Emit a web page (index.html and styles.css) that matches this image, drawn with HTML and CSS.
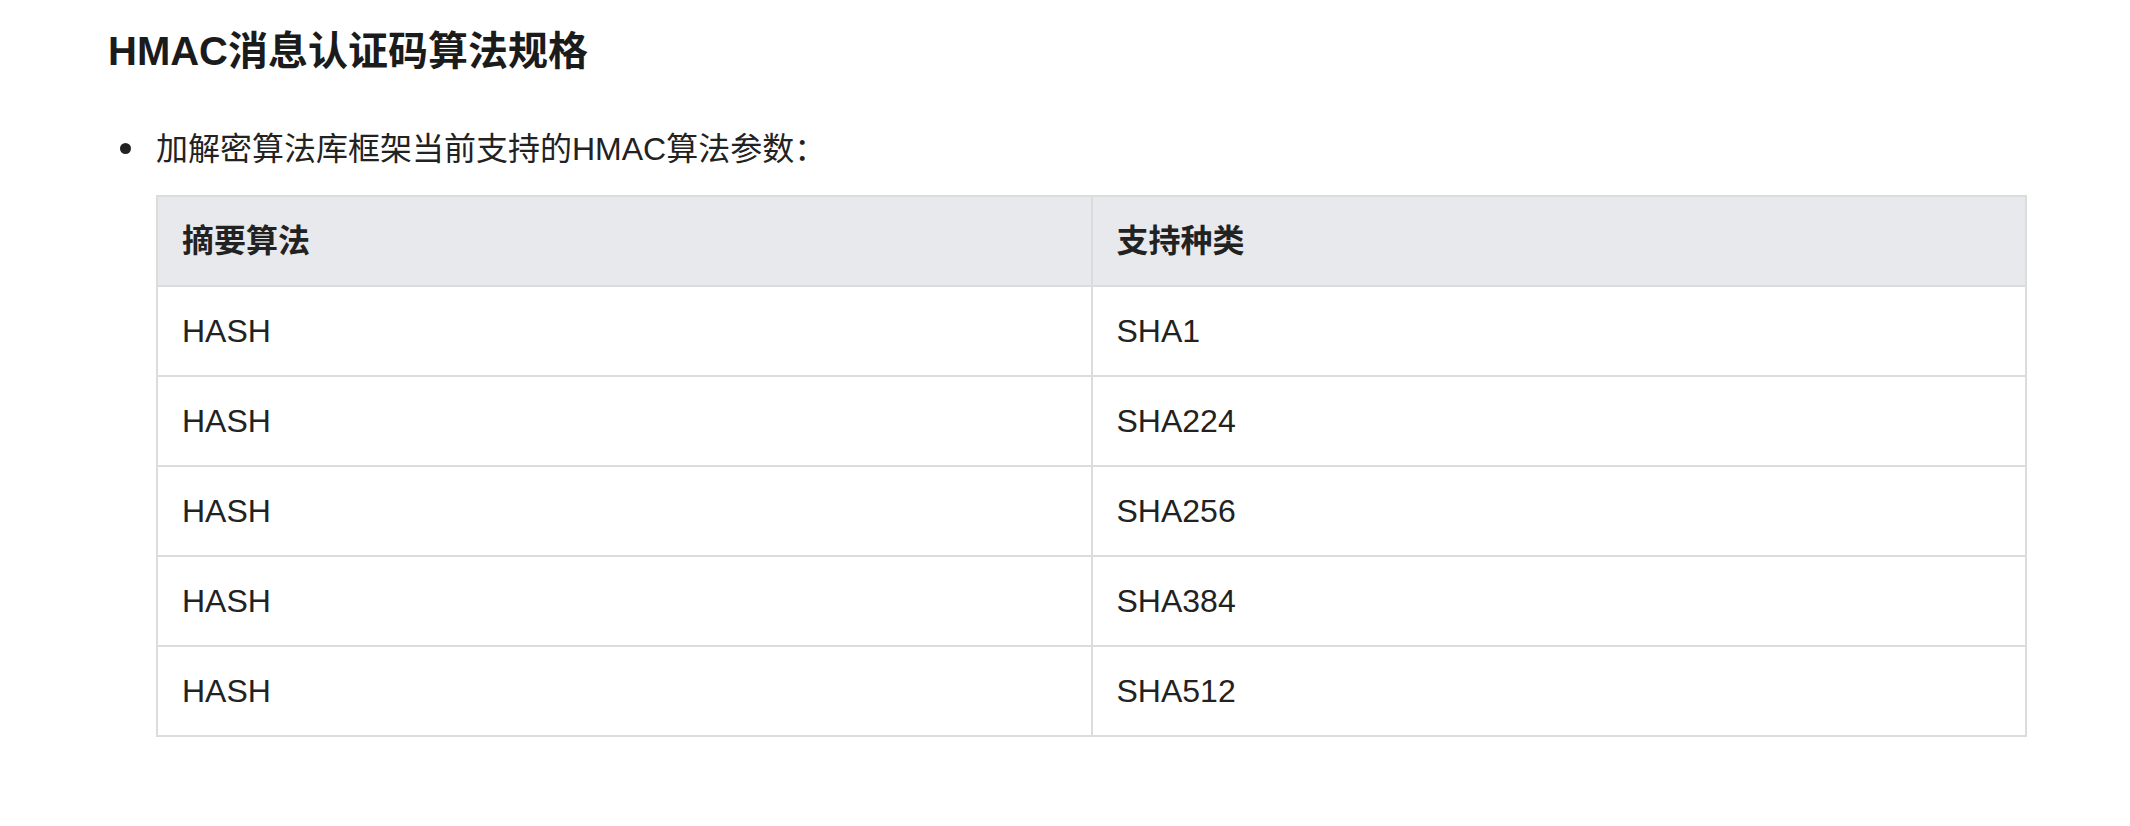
FILE: index.html
```html
<!DOCTYPE html>
<html lang="zh-CN">
<head>
<meta charset="utf-8">
<title>HMAC消息认证码算法规格</title>
<link rel="stylesheet" href="styles.css">
</head>
<body>
<div class="doc">
  <h2 class="title">HMAC消息认证码算法规格</h2>
  <ul class="list">
    <li class="item">
      <p class="lead">加解密算法库框架当前支持的HMAC算法参数：</p>
      <table class="spec">
        <thead>
          <tr><th>摘要算法</th><th>支持种类</th></tr>
        </thead>
        <tbody>
          <tr><td>HASH</td><td>SHA1</td></tr>
          <tr><td>HASH</td><td>SHA224</td></tr>
          <tr><td>HASH</td><td>SHA256</td></tr>
          <tr><td>HASH</td><td>SHA384</td></tr>
          <tr><td>HASH</td><td>SHA512</td></tr>
        </tbody>
      </table>
    </li>
  </ul>
</div>
</body>
</html>
```
FILE: styles.css
```css
html, body {
  margin: 0;
  padding: 0;
  background: #ffffff;
}
body {
  font-family: "Liberation Sans", "Noto Sans CJK SC", sans-serif;
  color: #222222;
}
.doc {
  padding: 23px 103px 0 108px;
}
.title {
  margin: 0;
  font-size: 40px;
  line-height: 56px;
  font-weight: 700;
  color: #1b1b1b;
}
.list {
  margin: 46px 0 0 0;
  padding: 0 0 0 48px;
  list-style: none;
}
.item {
  font-size: 32px;
  line-height: 48px;
}
.lead {
  margin: 0;
}
.lead::before {
  content: "";
  display: inline-block;
  width: 11px;
  height: 11px;
  border-radius: 50%;
  background: #222222;
  margin-left: -36px;
  margin-right: 25px;
  vertical-align: 6px;
}
.spec {
  margin-top: 22px;
  width: 100%;
  border-collapse: separate;
  border-spacing: 0;
  border-top: 2px solid #dcdcdc;
  border-left: 2px solid #dcdcdc;
  table-layout: fixed;
}
.spec th,
.spec td {
  width: 50%;
  text-align: left;
  padding: 20px 24px;
  font-size: 32px;
  line-height: 48px;
  border-right: 2px solid #dcdcdc;
  border-bottom: 2px solid #dcdcdc;
  color: #222222;
}
.spec th {
  background: #e8e9ec;
  font-weight: 700;
}
```
